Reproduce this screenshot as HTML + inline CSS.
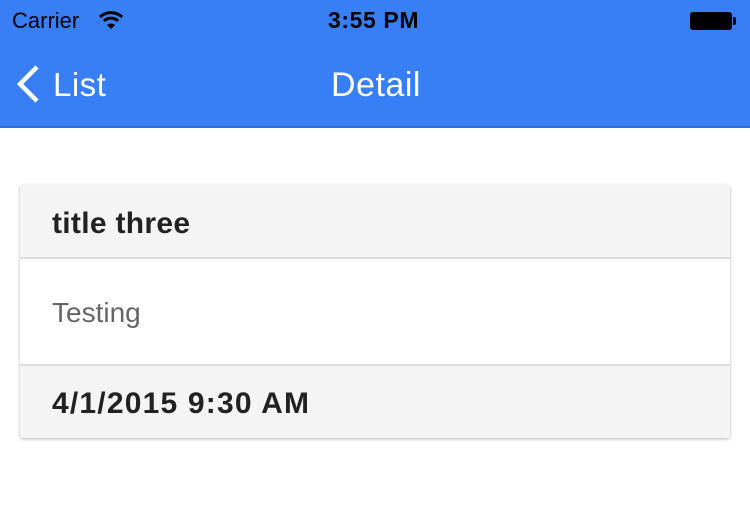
<!DOCTYPE html>
<html><head><meta charset="utf-8"><style>
*{margin:0;padding:0;box-sizing:border-box}
body{width:750px;height:505px;background:#fff;font-family:"Liberation Sans",sans-serif;position:relative;overflow:hidden}
.bar{position:absolute;left:0;top:0;width:750px;height:128px;background:#387ef5;border-bottom:2px solid #2e6fd9}
.t{position:absolute;white-space:nowrap}
.card{position:absolute;left:20px;top:185px;width:710px;height:253px;border-radius:3px;box-shadow:0 1px 3px rgba(0,0,0,.3);overflow:hidden;background:#fff}
.row{position:absolute;left:0;width:710px}
</style></head><body>
<div class="bar"></div>
<div class="t" style="left:12px;top:8px;font-size:22px;color:#000">Carrier</div>
<svg style="position:absolute;left:98px;top:10px" width="26" height="20" viewBox="0 0 26 20">
<path d="M2 7 A16 16 0 0 1 24 7" stroke="#000" stroke-width="3" fill="none"/>
<path d="M6 11 A10 10 0 0 1 20 11" stroke="#000" stroke-width="3" fill="none"/>
<path d="M13 19 L9 15 A6 6 0 0 1 17 15 Z" fill="#000"/>
</svg>
<div class="t" style="left:328px;top:7px;font-size:23px;font-weight:bold;color:#000;letter-spacing:0.6px">3:55 PM</div>
<div style="position:absolute;left:690px;top:12px;width:42px;height:18px;border:1.5px solid #000;border-radius:3px;background:#000"></div>
<div style="position:absolute;left:733px;top:17px;width:3px;height:8px;background:#000;border-radius:0 2px 2px 0"></div>
<svg style="position:absolute;left:12px;top:64px" width="30" height="40" viewBox="0 0 30 40">
<path d="M25 3 L8 20 L25 37" stroke="#fff" stroke-width="4.5" fill="none"/>
</svg>
<div class="t" style="left:53px;top:66px;font-size:33px;color:#fff;letter-spacing:0.5px">List</div>
<div class="t" style="left:331px;top:66px;font-size:34px;color:#fff;letter-spacing:0.5px">Detail</div>
<div class="card">
<div class="row" style="top:0;height:74px;background:#f4f4f4;border-bottom:2px solid #ddd"></div>
<div class="t" style="left:32px;top:22px;font-size:30px;font-weight:bold;color:#222;letter-spacing:0.3px">title three</div>
<div class="t" style="left:32px;top:112px;font-size:28px;color:#666">Testing</div>
<div class="row" style="top:179px;height:74px;background:#f4f4f4;border-top:2px solid #ddd"></div>
<div class="t" style="left:32px;top:202px;font-size:30px;font-weight:bold;color:#222;letter-spacing:1.2px">4/1/2015 9:30 AM</div>
</div>
</body></html>
